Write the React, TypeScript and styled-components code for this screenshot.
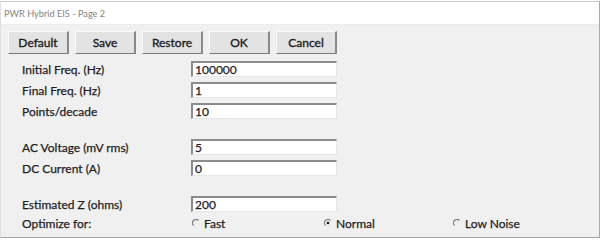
import React, { useState } from "react";
import styled, { createGlobalStyle } from "styled-components";

const GlobalStyle = createGlobalStyle`
  html, body {
    margin: 0;
    padding: 0;
    background: #ffffff;
  }
  body {
    font-family: Lato, "Open Sans", sans-serif;
  }
`;

const fields = [
  { label: "Initial Freq. (Hz)", value: "100000", gap: false },
  { label: "Final Freq. (Hz)", value: "1", gap: false },
  { label: "Points/decade", value: "10", gap: false },
  { label: "AC Voltage (mV rms)", value: "5", gap: true },
  { label: "DC Current (A)", value: "0", gap: false },
  { label: "Estimated Z (ohms)", value: "200", gap: true },
];

const buttons = ["Default", "Save", "Restore", "OK", "Cancel"];
const modes = ["Fast", "Normal", "Low Noise"];

const RadioMark = ({ checked }: { checked: boolean }) => (
  <svg width="8" height="8" viewBox="0 0 8 8">
    <path d="M6.5 1.5 A3.5 3.5 0 0 0 1.5 6.5" fill="none" stroke="#7a7a7a" strokeWidth="1.2" />
    {checked && <circle cx="4" cy="4" r="1.3" fill="#111" />}
  </svg>
);

const App = () => {
  const [mode, setMode] = useState("Normal");
  return (
    <>
      <GlobalStyle />
      <Window>
        <TitleBar>PWR Hybrid EIS - Page 2</TitleBar>
        <Body>
          <Toolbar>
            {buttons.map((b) => (
              <Button key={b}>{b}</Button>
            ))}
          </Toolbar>
          <Form>
            {fields.map((f) => (
              <Row key={f.label} space={f.gap ? 20 : 5}>
                <Label>{f.label}</Label>
                <Input defaultValue={f.value} />
              </Row>
            ))}
            <Row space={3}>
              <Label>Optimize for:</Label>
              <Options>
                {modes.map((m) => (
                  <Option key={m} onClick={() => setMode(m)}>
                    <RadioMark checked={mode === m} />
                    <span>{m}</span>
                  </Option>
                ))}
              </Options>
            </Row>
          </Form>
        </Body>
      </Window>
    </>
  );
};

const Window = styled.div`
  width: 598px;
  margin-top: 1px;
  border-top: 1px solid #cfcfcf;
  border-left: 1px solid #dedede;
  border-right: 1px solid #a9a9a9;
  border-bottom: 1px solid #a4a4a4;
  background: #f0f0f0;
`;

const TitleBar = styled.div`
  height: 22px;
  background: #ffffff;
  color: #858585;
  font-size: 9.2px;
  line-height: 24px;
  padding-left: 3px;
  border-bottom: 1px solid #ececec;
`;

const Body = styled.div`
  height: 212px;
  padding: 6px 0 0 7px;
  box-sizing: border-box;
`;

const Toolbar = styled.div`
  display: flex;
  gap: 6px;
`;

const Button = styled.button`
  width: 61px;
  height: 23px;
  padding: 0;
  background: #e3e3e3;
  border: none;
  border-top: 1px solid #fafafa;
  border-left: 1px solid #fafafa;
  border-right: 2px solid #8a8a8a;
  border-bottom: 1px solid #7a7a7a;
  font-family: Lato, sans-serif;
  font-size: 12px;
  font-weight: 400;
  -webkit-text-stroke: 0.35px #1c1c1c;
  color: #1c1c1c;
`;

const Form = styled.div`
  display: flex;
  flex-direction: column;
  padding-left: 14px;
  margin-top: 7px;
`;

const Row = styled.div<{ space: number }>`
  display: grid;
  grid-template-columns: 169px 146px;
  align-items: center;
  height: 16px;
  margin-top: ${(p) => p.space}px;
  &:first-child {
    margin-top: 0;
  }
`;

const Label = styled.span`
  font-size: 12px;
  color: #1e1e1e;
  -webkit-text-stroke: 0.25px #1e1e1e;
`;

const Input = styled.input`
  box-sizing: border-box;
  width: 146px;
  height: 16px;
  padding: 0 0 0 2px;
  background: #ffffff;
  border: none;
  border-top: 2px solid #8c8c8c;
  border-left: 2px solid #8c8c8c;
  border-right: 1px solid #e6e6e6;
  border-bottom: 1px solid #e6e6e6;
  font-family: Lato, sans-serif;
  font-size: 12px;
  -webkit-text-stroke: 0.25px #1e1e1e;
  color: #1e1e1e;
  outline: none;
`;

const Options = styled.div`
  display: grid;
  grid-template-columns: 132px 129px 140px;
  margin-left: 1px;
`;

const Option = styled.label`
  display: flex;
  align-items: center;
  gap: 4px;
  font-size: 12px;
  -webkit-text-stroke: 0.25px #1e1e1e;
  color: #1e1e1e;
  cursor: pointer;
`;

export default App;
